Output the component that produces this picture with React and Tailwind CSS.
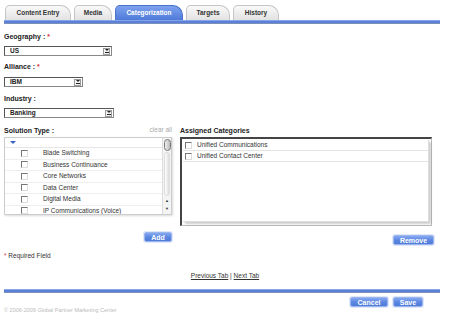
const tabs = ['Content Entry', 'Media', 'Categorization', 'Targets', 'History'];
const tabWidths = { 'Content Entry': 'w-[66px]', Media: 'w-[38px]', Categorization: 'w-[68px]', Targets: 'w-[44px]', History: 'w-[46px]' };

const solutions = [
  'Blade Switching',
  'Business Continuance',
  'Core Networks',
  'Data Center',
  'Digital Media',
  'IP Communications (Voice)',
];

const assigned = ['Unified Communications', 'Unified Contact Center'];

function Check() {
  return <span className="block w-[7px] h-[7px] border-t border-l border-[#777] border-r border-b border-r-[#ddd] border-b-[#ddd] bg-white" />;
}

function Select({ value, width }) {
  return (
    <div className={`${width} h-[10px] flex items-center border border-[#888] border-t-[#555] border-l-[#555] bg-white`}>
      <span className="flex-1 pl-[5px] text-[6.5px] leading-none font-bold text-[#222]">{value}</span>
      <span className="w-[7px] h-[7px] mr-[1px] flex flex-col items-center justify-center border border-[#999] bg-[#f2f2f2]">
        <span className="block w-0 h-0 border-l-[2px] border-r-[2px] border-t-[2px] border-l-transparent border-r-transparent border-t-[#222]" />
        <span className="block w-[4px] h-px bg-[#222] mt-px" />
      </span>
    </div>
  );
}

function Label({ children, req }) {
  return (
    <div className="text-[7px] leading-none font-bold text-[#222]">
      {children}
      {req && <span className="text-[#d33]"> *</span>}
    </div>
  );
}

function BlueButton({ children, className }) {
  return (
    <div className={`h-[10px] flex items-center justify-center rounded-[2px] border border-[#9bb6ee] bg-gradient-to-b from-[#86a8f0] via-[#5d88e2] to-[#4f7bd8] text-white text-[7px] font-bold leading-none shadow-[0_0_0_1px_#dfe7f8] ${className}`}>
      {children}
    </div>
  );
}

function BlueBar() {
  return <div className="mx-[4px] w-[436px] h-[4px] bg-[#5b80d8] border-t border-[#86a4ea] border-b border-b-[#7c8fb8]" />;
}

export default function App() {
  return (
    <div className="w-[450px] h-[313px] overflow-hidden bg-white font-['Liberation_Sans',Arial,sans-serif] text-[#222]">
      {/* tabs */}
      <div className="flex items-end gap-[3px] pl-[5px] pt-[5px] h-[20px]">
        {tabs.map((t) => {
          const active = t === 'Categorization';
          return (
            <div
              key={t}
              className={`${tabWidths[t]} h-[15px] flex items-center justify-center rounded-tl-[5px] rounded-tr-[10px] border border-b-0 text-[6.5px] font-bold leading-none ${
                active
                  ? 'bg-gradient-to-b from-[#7ea2ee] to-[#4f7ad8] border-[#4a72cc] text-white'
                  : 'bg-gradient-to-b from-[#fafafa] to-[#e2e2e2] border-[#c4c4c4] text-[#333]'
              }`}
            >
              {t}
            </div>
          );
        })}
      </div>
      <BlueBar />

      <div className="px-[4px]">
        <div className="mt-[9px]">
          <Label req>Geography :</Label>
        </div>
        <div className="mt-[6px]">
          <Select value="US" width="w-[108px]" />
        </div>

        <div className="mt-[7px]">
          <Label req>Alliance :</Label>
        </div>
        <div className="mt-[7px]">
          <Select value="IBM" width="w-[79px]" />
        </div>

        <div className="mt-[8px]">
          <Label>Industry :</Label>
        </div>
        <div className="mt-[6px]">
          <Select value="Banking" width="w-[110px]" />
        </div>

        <div className="mt-[9px] flex gap-[8px]">
          {/* left column */}
          <div className="w-[168px]">
            <div className="flex items-center justify-between h-[7px]">
              <Label>Solution Type :</Label>
              <span className="text-[6.5px] leading-none text-[#aaa]">clear all</span>
            </div>
            <div className="mt-[3px] h-[78px] border border-[#ccc] shadow-[1px_1px_2px_rgba(0,0,0,0.15)] flex overflow-hidden">
              <div className="flex-1 overflow-hidden">
                <div className="h-[10px] pl-[5px] pt-[3px] border-b border-[#e6e6e6]">
                  <span className="block w-0 h-0 border-l-[3px] border-r-[3px] border-t-[3px] border-l-transparent border-r-transparent border-t-[#3b63c4]" />
                </div>
                {solutions.map((s) => (
                  <div key={s} className="h-[11.5px] flex items-center border-b border-[#eee]">
                    <span className="ml-[16px]">
                      <Check />
                    </span>
                    <span className="ml-[15px] text-[6.5px] leading-none text-[#333]">{s}</span>
                  </div>
                ))}
              </div>
              <div className="w-[9px] flex flex-col items-center bg-[#f4f4f4] border-l border-[#ddd]">
                <div className="mt-[1px] w-[7px] h-[12px] rounded-[4px] border border-[#777] bg-gradient-to-r from-[#eee] to-[#bbb]" />
                <div className="mt-[1px] w-[6px] flex-1 rounded-[3px] bg-gradient-to-r from-[#fff] to-[#ddd] border border-[#ddd]" />
                <div className="h-[18px] flex flex-col items-center justify-center gap-[4px] text-[4px] leading-none text-[#333]">
                  <span>▲</span>
                  <span>▼</span>
                </div>
              </div>
            </div>
            <div className="mt-[17px] flex justify-end">
              <BlueButton className="w-[28px]">Add</BlueButton>
            </div>
          </div>

          {/* right column */}
          <div className="w-[252px]">
            <div className="h-[7px] flex items-center">
              <Label>Assigned Categories</Label>
            </div>
            <div className="mt-[3px] h-[89px] border-t-2 border-l-2 border-[#444] border-r border-b border-r-[#bbb] border-b-[#bbb] p-[1px]">
              <div className="w-[246px] h-[82px] bg-white shadow-[2px_2px_2px_rgba(0,0,0,0.2)] border-r border-b border-[#ddd]">
                {assigned.map((a) => (
                  <div key={a} className="h-[11px] flex items-center border-b border-[#e4e4e4]">
                    <span className="ml-[2px]">
                      <Check />
                    </span>
                    <span className="ml-[5px] text-[6.5px] leading-none text-[#333]">{a}</span>
                  </div>
                ))}
              </div>
            </div>
            <div className="mt-[9px] flex justify-end">
              <BlueButton className="w-[41px] mr-[-2px]">Remove</BlueButton>
            </div>
          </div>
        </div>

        <div className="mt-[8px] text-[6.5px] leading-none text-[#333]">
          <span className="text-[#d33]">* </span>Required Field
        </div>

        <div className="mt-[13px] w-[442px] text-center text-[6.5px] leading-none text-[#333]">
          <span className="underline">Previous Tab</span> | <span className="underline">Next Tab</span>
        </div>
      </div>

      <div className="mt-[10px]">
        <BlueBar />
      </div>

      <div className="mt-[4px] pr-[27px] flex justify-end gap-[5px]">
        <BlueButton className="w-[38px]">Cancel</BlueButton>
        <BlueButton className="w-[30px]">Save</BlueButton>
      </div>
      <div className="mt-[1px] pl-[4px] text-[5.5px] leading-none text-[#bbb]">© 2006-2009 Global Partner Marketing Center</div>
    </div>
  );
}
